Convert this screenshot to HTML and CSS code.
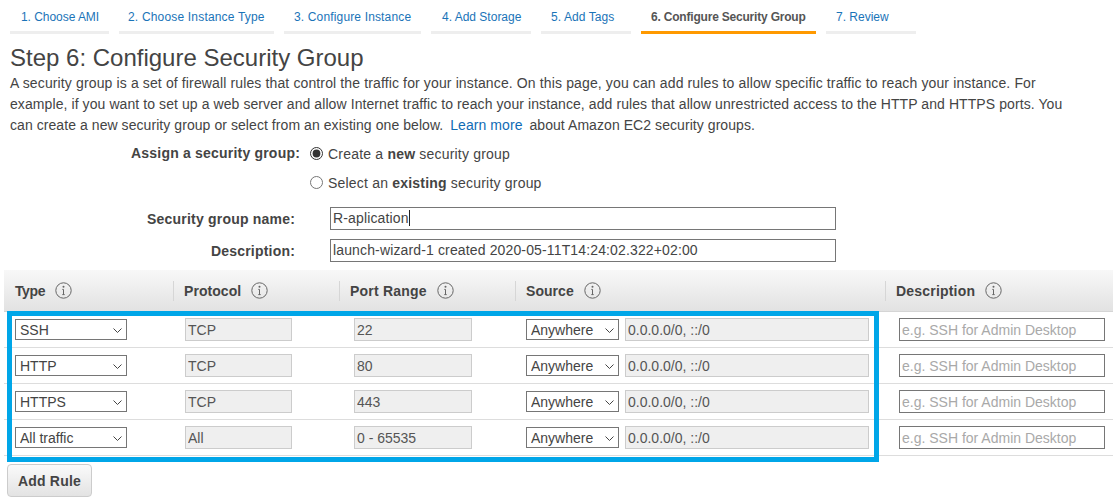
FILE: index.html
```html
<!DOCTYPE html>
<html lang="en">
<head>
<meta charset="utf-8">
<title>Step 6: Configure Security Group</title>
<link rel="stylesheet" href="styles.css">
</head>
<body>
<nav class="tabs">
  <a class="tab t1">1. Choose AMI</a>
  <a class="tab t2">2. Choose Instance Type</a>
  <a class="tab t3">3. Configure Instance</a>
  <a class="tab t4">4. Add Storage</a>
  <a class="tab t5">5. Add Tags</a>
  <a class="tab t6 active">6. Configure Security Group</a>
  <a class="tab t7">7. Review</a>
</nav>
<header class="intro">
  <h1>Step 6: Configure Security Group</h1>
  <p><span class="line l1">A security group is a set of firewall rules that control the traffic for your instance. On this page, you can add rules to allow specific traffic to reach your instance. For</span><span class="line l2">example, if you want to set up a web server and allow Internet traffic to reach your instance, add rules that allow unrestricted access to the HTTP and HTTPS ports. You</span><span class="line l3">can create a new security group or select from an existing one below. <a class="link">Learn more</a> about Amazon EC2 security groups.</span></p>
</header>
<section class="assign">
  <div class="assign-label">Assign a security group:</div>
  <div class="radios">
    <label class="radio"><input type="radio" name="sg" checked>Create a&nbsp;<b>new</b>&nbsp;security group</label>
    <label class="radio"><input type="radio" name="sg">Select an&nbsp;<b>existing</b>&nbsp;security group</label>
  </div>
</section>
<section class="fields">
  <div class="field-row">
    <div class="field-label">Security group name:</div>
    <div class="text-field">R-aplication<span class="caret"></span></div>
  </div>
  <div class="field-row">
    <div class="field-label">Description:</div>
    <div class="text-field">launch-wizard-1 created 2020-05-11T14:24:02.322+02:00</div>
  </div>
</section>
<section class="rules">
  <div class="grid head">
    <div class="th"><span class="type-title">Type</span><svg class="info" viewBox="0 0 17 17"><circle cx="8.5" cy="8.5" r="7.7"/><path d="M8.5 7.4v5.2M7.3 12.6h2.4M7.3 7.4h1.2"/><circle class="dot" cx="8.5" cy="4.8" r="1"/></svg></div>
    <div class="th div"><span class="proto-title">Protocol</span><svg class="info" viewBox="0 0 17 17"><circle cx="8.5" cy="8.5" r="7.7"/><path d="M8.5 7.4v5.2M7.3 12.6h2.4M7.3 7.4h1.2"/><circle class="dot" cx="8.5" cy="4.8" r="1"/></svg></div>
    <div class="th div">Port Range<svg class="info" viewBox="0 0 17 17"><circle cx="8.5" cy="8.5" r="7.7"/><path d="M8.5 7.4v5.2M7.3 12.6h2.4M7.3 7.4h1.2"/><circle class="dot" cx="8.5" cy="4.8" r="1"/></svg></div>
    <div class="th div"><span class="proto-title">Source</span><svg class="info" viewBox="0 0 17 17"><circle cx="8.5" cy="8.5" r="7.7"/><path d="M8.5 7.4v5.2M7.3 12.6h2.4M7.3 7.4h1.2"/><circle class="dot" cx="8.5" cy="4.8" r="1"/></svg></div>
    <div class="th div">Description<svg class="info" viewBox="0 0 17 17"><circle cx="8.5" cy="8.5" r="7.7"/><path d="M8.5 7.4v5.2M7.3 12.6h2.4M7.3 7.4h1.2"/><circle class="dot" cx="8.5" cy="4.8" r="1"/></svg></div>
  </div>
  <div class="grid row">
    <div class="td c-type"><span class="sel-wrap type"><select class="sel"><option>SSH</option></select><svg class="chev" viewBox="0 0 9 5"><path d="M.5.5l4 4 4-4"/></svg></span></div>
    <div class="td c-proto"><input class="ro proto" value="TCP" disabled></div>
    <div class="td c-port"><input class="ro port" value="22" disabled></div>
    <div class="td c-src"><span class="sel-wrap src"><select class="sel"><option>Anywhere</option></select><svg class="chev" viewBox="0 0 9 5"><path d="M.5.5l4 4 4-4"/></svg></span><input class="ro cidr" value="0.0.0.0/0, ::/0" disabled></div>
    <div class="td c-desc"><input class="desc" placeholder="e.g. SSH for Admin Desktop"></div>
  </div>
  <div class="grid row">
    <div class="td c-type"><span class="sel-wrap type"><select class="sel"><option>HTTP</option></select><svg class="chev" viewBox="0 0 9 5"><path d="M.5.5l4 4 4-4"/></svg></span></div>
    <div class="td c-proto"><input class="ro proto" value="TCP" disabled></div>
    <div class="td c-port"><input class="ro port" value="80" disabled></div>
    <div class="td c-src"><span class="sel-wrap src"><select class="sel"><option>Anywhere</option></select><svg class="chev" viewBox="0 0 9 5"><path d="M.5.5l4 4 4-4"/></svg></span><input class="ro cidr" value="0.0.0.0/0, ::/0" disabled></div>
    <div class="td c-desc"><input class="desc" placeholder="e.g. SSH for Admin Desktop"></div>
  </div>
  <div class="grid row">
    <div class="td c-type"><span class="sel-wrap type"><select class="sel"><option>HTTPS</option></select><svg class="chev" viewBox="0 0 9 5"><path d="M.5.5l4 4 4-4"/></svg></span></div>
    <div class="td c-proto"><input class="ro proto" value="TCP" disabled></div>
    <div class="td c-port"><input class="ro port" value="443" disabled></div>
    <div class="td c-src"><span class="sel-wrap src"><select class="sel"><option>Anywhere</option></select><svg class="chev" viewBox="0 0 9 5"><path d="M.5.5l4 4 4-4"/></svg></span><input class="ro cidr" value="0.0.0.0/0, ::/0" disabled></div>
    <div class="td c-desc"><input class="desc" placeholder="e.g. SSH for Admin Desktop"></div>
  </div>
  <div class="grid row">
    <div class="td c-type"><span class="sel-wrap type"><select class="sel"><option>All traffic</option></select><svg class="chev" viewBox="0 0 9 5"><path d="M.5.5l4 4 4-4"/></svg></span></div>
    <div class="td c-proto"><input class="ro proto" value="All" disabled></div>
    <div class="td c-port"><input class="ro port" value="0 - 65535" disabled></div>
    <div class="td c-src"><span class="sel-wrap src"><select class="sel"><option>Anywhere</option></select><svg class="chev" viewBox="0 0 9 5"><path d="M.5.5l4 4 4-4"/></svg></span><input class="ro cidr" value="0.0.0.0/0, ::/0" disabled></div>
    <div class="td c-desc"><input class="desc" placeholder="e.g. SSH for Admin Desktop"></div>
  </div>
  <div class="highlight"></div>
</section>
<button class="add">Add Rule</button>
</body>
</html>
```
FILE: styles.css
```css
* { box-sizing: border-box; }
html, body { margin: 0; padding: 0; }
body {
  width: 1113px;
  height: 504px;
  overflow: hidden;
  background: #fff;
  color: #444;
  font-family: "Liberation Sans", Arial, sans-serif;
  font-size: 14px;
}

/* wizard tabs */
.tabs { display: flex; gap: 10px; padding: 0 0 0 10px; height: 34px; }
.tab {
  display: block;
  height: 34px;
  padding: 10px 0 0 11px;
  font-size: 12px;
  line-height: 14px;
  color: #1a74b8;
  border-bottom: 3px solid #eeeeee;
  white-space: nowrap;
}
.t1 { width: 99px; letter-spacing: -0.05px; }
.t2 { width: 155px; padding-left: 9px; letter-spacing: 0.18px; }
.t3 { width: 137px; padding-left: 10px; letter-spacing: 0.15px; }
.t4 { width: 100px; }
.t5 { width: 90px; padding-left: 10px; letter-spacing: 0.08px; }
.t6 { width: 175px; padding-left: 10px; letter-spacing: -0.2px; }
.t7 { width: 90px; padding-left: 10px; }
.tab.active { color: #555; font-weight: bold; border-bottom-color: #ff9900; }

/* intro */
.intro { padding: 10px 0 0 10px; }
h1 {
  margin: 0 0 1px;
  font-size: 24px;
  font-weight: normal;
  line-height: 28px;
  color: #444;
}
.intro p {
  margin: 0;
  font-size: 14px;
  line-height: 21px;
  white-space: nowrap;
}
.line { display: block; }
.l1 { letter-spacing: 0.13px; }
.l2 { letter-spacing: 0.083px; }
.l3 { letter-spacing: 0.065px; }
.link { color: #0f6bb5; margin: 0 3px; }

/* assign */
.assign { display: flex; padding-top: 3px; }
.assign-label {
  width: 300px;
  text-align: right;
  font-weight: bold;
  font-size: 14px;
  line-height: 29px;
  letter-spacing: 0.2px;
}
.radios { display: flex; flex-direction: column; padding-left: 10px; }
.radio { display: flex; align-items: center; height: 29px; font-size: 14px; letter-spacing: 0.2px; }
.radio input { margin: 0 5px 0 0; width: 13px; height: 13px; accent-color: #333; }

/* name / description */
.fields { display: flex; flex-direction: column; gap: 9px; padding-top: 10px; }
.field-row { display: flex; align-items: center; }
.field-label {
  width: 295px;
  text-align: right;
  font-weight: bold;
  font-size: 14px;
  letter-spacing: 0.2px;
}
.text-field {
  margin-left: 35px;
  width: 506px;
  height: 23px;
  border: 1px solid #767676;
  padding-left: 2px;
  font-size: 14px;
  line-height: 21px;
  color: #444;
  letter-spacing: 0.14px;
}
.caret { display: inline-block; width: 1px; height: 16px; background: #222; vertical-align: -3px; }

/* rules table */
.rules { position: relative; margin: 8px 0 0 4px; width: 1109px; }
.grid { display: grid; grid-template-columns: 169px 166px 176px 370px 228px; }
.head {
  height: 42px;
  background: linear-gradient(#f8f8f8, #e2e2e2);
  border-bottom: 1px solid #d5d5d5;
  align-items: center;
}
.th {
  display: flex;
  align-items: center;
  height: 20px;
  padding-left: 11px;
  font-weight: bold;
  font-size: 14px;
  color: #444;
  letter-spacing: 0.2px;
}
.th.div { border-left: 1px solid #d6d6d6; padding-left: 10px; }
.type-title { letter-spacing: -0.4px; }
.proto-title { letter-spacing: 0.05px; }
.info { width: 17px; height: 17px; margin-left: 10px; fill: none; stroke: #666; stroke-width: 1; }
.info .dot { fill: #666; stroke: none; }

.row { height: 36px; border-bottom: 1px solid #ddd; }
.td { display: flex; align-items: center; height: 35px; }
.c-type { padding-left: 11px; }
.c-proto { padding-left: 12px; }
.c-port { padding-left: 15px; }
.c-src { padding-left: 11px; gap: 6px; }
.c-desc { padding-left: 14px; }

.sel-wrap { position: relative; display: block; height: 21px; }
.sel-wrap.type { width: 112px; }
.sel-wrap.src { width: 93px; }
.sel {
  appearance: none;
  display: block;
  width: 100%;
  height: 21px;
  border: 1px solid #767676;
  border-radius: 0;
  background: #fff;
  color: #444;
  font-family: "Liberation Sans", Arial, sans-serif;
  font-size: 14px;
  padding: 0 0 0 4px;
}
.chev {
  position: absolute;
  right: 5px;
  top: 9px;
  width: 9px;
  height: 5px;
  fill: none;
  stroke: #444;
  stroke-width: 1;
  pointer-events: none;
}
input { font-family: "Liberation Sans", Arial, sans-serif; font-size: 14px; }
.ro {
  height: 23px;
  border: 1px solid #ccc;
  background: #efefef;
  color: #555;
  padding: 0 2px;
}
.proto { width: 107px; }
.port { width: 118px; }
.cidr { width: 244px; }
.desc {
  width: 206px;
  height: 23px;
  border: 1px solid #767676;
  padding: 0 2px;
  background: #fff;
}
.desc::placeholder { color: #a9a9a9; opacity: 1; }

.highlight {
  position: absolute;
  left: 3px;
  top: 41px;
  width: 872px;
  height: 151px;
  border: 5px solid #00a6e8;
  pointer-events: none;
}

.add {
  display: block;
  margin: 8px 0 0 7px;
  width: 85px;
  height: 33px;
  border: 1px solid #ccc;
  border-radius: 4px;
  background: linear-gradient(#fafafa, #e3e3e3);
  color: #444;
  font-family: "Liberation Sans", Arial, sans-serif;
  font-size: 14px;
  font-weight: bold;
  padding: 0;
  letter-spacing: 0.2px;
}
```
